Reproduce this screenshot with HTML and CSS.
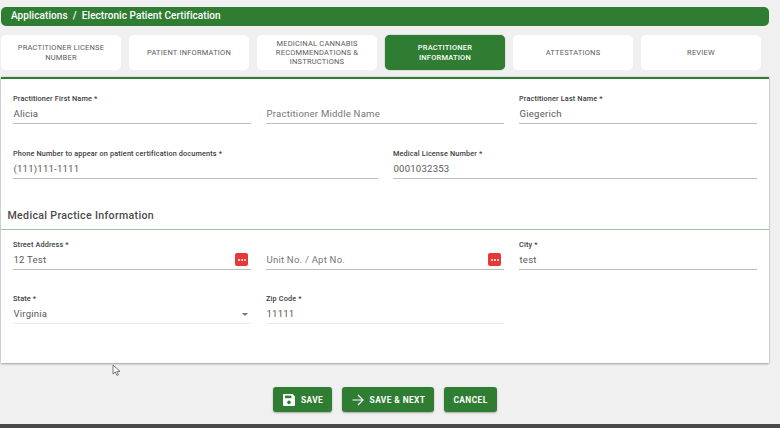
FILE: index.html
```html
<!DOCTYPE html>
<html lang="en">
<head>
<meta charset="utf-8">
<title>Electronic Patient Certification</title>
<link rel="stylesheet" href="styles.css">
</head>
<body>
<div class="page">
  <div class="crumb">Applications&nbsp; /&nbsp; Electronic Patient Certification</div>
  <nav class="tabs">
    <div class="tab">PRACTITIONER LICENSE NUMBER</div>
    <div class="tab">PATIENT INFORMATION</div>
    <div class="tab tab-tight">MEDICINAL CANNABIS RECOMMENDATIONS &amp; INSTRUCTIONS</div>
    <div class="tab active">PRACTITIONER INFORMATION</div>
    <div class="tab">ATTESTATIONS</div>
    <div class="tab">REVIEW</div>
  </nav>
  <main class="card">
    <div class="grid three row-first">
      <div class="field"><label>Practitioner First Name *</label><div class="value">Alicia</div></div>
      <div class="field"><label>&nbsp;</label><div class="value muted">Practitioner Middle Name</div></div>
      <div class="field"><label>Practitioner Last Name *</label><div class="value">Giegerich</div></div>
    </div>
    <div class="grid two row-second">
      <div class="field"><label>Phone Number to appear on patient certification documents *</label><div class="value">(111)111-1111</div></div>
      <div class="field"><label>Medical License Number *</label><div class="value">0001032353</div></div>
    </div>
    <h2 class="section">Medical Practice Information</h2>
    <div class="grid three row-third">
      <div class="field"><label>Street Address *</label><div class="value">12 Test<span class="more"><i></i><i></i><i></i></span></div></div>
      <div class="field"><label>&nbsp;</label><div class="value muted">Unit No. / Apt No.<span class="more"><i></i><i></i><i></i></span></div></div>
      <div class="field"><label>City *</label><div class="value">test</div></div>
    </div>
    <div class="grid three row-fourth">
      <div class="field light"><label>State *</label><div class="value">Virginia<span class="caret"></span></div></div>
      <div class="field light"><label>Zip Code *</label><div class="value">11111</div></div>
    </div>
  </main>
  <div class="actions">
    <button class="btn btn-save" type="button">
      <svg class="ico" width="14" height="14" viewBox="0 0 14 14"><path fill="#fff" d="M1.5 1h9L13 3.5V12a1 1 0 0 1-1 1H2a1 1 0 0 1-1-1V1.5A.5.5 0 0 1 1.5 1z"/><rect x="3" y="2.6" width="6.4" height="2.6" fill="#2e7d32"/><circle cx="7" cy="9.4" r="1.8" fill="#2e7d32"/></svg>SAVE</button>
    <button class="btn btn-next" type="button">
      <svg class="ico" width="14" height="14" viewBox="0 0 14 14"><path fill="none" stroke="#fff" stroke-width="1.2" d="M1.5 7h10.5M7 2l5 5-5 5"/></svg>SAVE &amp; NEXT</button>
    <button class="btn btn-cancel" type="button">CANCEL</button>
  </div>
  <svg class="cursor" width="10" height="13" viewBox="0 0 10 13"><path fill="#fff" stroke="#555" stroke-width=".8" d="M1 1v9l2.3-2 1.6 3.4 1.5-.7-1.6-3.3H8z"/></svg>
</div>
<div class="footer-line"></div>
</body>
</html>
```
FILE: styles.css
```css
* { box-sizing: border-box; }
html, body { margin: 0; height: 100%; }
body {
  background: #f0f0f0;
  font-family: Roboto, "Liberation Sans", sans-serif;
  color: #555;
  overflow: hidden;
  width: 780px;
  height: 428px;
  position: relative;
}
.page { padding: 7px 11px 0 1px; position: relative; }
.crumb {
  height: 19px;
  background: #2e7d32;
  border-radius: 5px;
  color: #fff;
  font-size: 10px;
  font-weight: 500;
  line-height: 18px;
  padding-left: 10px;
  letter-spacing: .07px;
}
.tabs { display: flex; gap: 8px; margin-top: 9px; padding-right: 8px; }
.tab {
  width: 120px;
  height: 35px;
  background: #fff;
  border-radius: 5px;
  display: flex;
  align-items: center;
  justify-content: center;
  text-align: center;
  font-size: 7.5px;
  line-height: 10px;
  padding: 0 8px;
  color: #5c5c5c;
  letter-spacing: .2px;
}
.tab-tight { line-height: 9.2px; padding: 0 6px; }
.tab.active { background: #2e7d32; color: #fff; font-weight: 500; padding: 0 24px; box-shadow: 0 0 1px #1b5e20; }
.card {
  margin-top: 7px;
  height: 286px;
  background: #fff;
  border-top: 2px solid #2e7d32;
  box-shadow: 0 1px 2px rgba(0,0,0,.3), 0 0 2px rgba(0,0,0,.15);
}
.grid { display: grid; padding: 0 12px; column-gap: 15px; }
.three { grid-template-columns: repeat(3, 238px); }
.two { grid-template-columns: 365px 364px; }
.row-first { padding-top: 16px; }
.row-second { padding-top: 26px; }
.row-third { padding-top: 11px; }
.row-fourth { padding-top: 25px; }
.field { height: 29px; border-bottom: 1px solid #bdbdbd; }
.field.light { border-bottom-color: #ececec; }
label {
  display: block;
  font-size: 7.3px;
  font-weight: 500;
  line-height: 8px;
  color: #3c3c3c;
  letter-spacing: .14px;
}
.value {
  position: relative;
  font-size: 9.6px;
  line-height: 14px;
  margin-top: 4px;
  padding-left: .5px;
  letter-spacing: .2px;
  color: #5a5a5a;
}
.muted { color: #777; }
.section {
  margin: 30px 0 0;
  height: 21px;
  padding-left: 6.5px;
  font-size: 10.6px;
  font-weight: 500;
  line-height: 14px;
  color: #4a4a4a;
  letter-spacing: .33px;
  border-bottom: 1px solid #9cc59e;
}
.more {
  position: absolute;
  right: 3px;
  top: 0;
  width: 13px;
  height: 13px;
  background: #e53935;
  border-radius: 2px;
  display: flex;
  align-items: center;
  justify-content: center;
  gap: 1px;
}
.more i { width: 2px; height: 2px; background: #fff; border-radius: 50%; }
.caret {
  position: absolute;
  right: 3px;
  top: 6px;
  border-left: 3.5px solid transparent;
  border-right: 3.5px solid transparent;
  border-top: 3.5px solid #777;
}
.actions { display: flex; justify-content: center; gap: 10px; margin-top: 24px; }
.btn {
  height: 25px;
  border: 0;
  border-radius: 3px;
  background: #2e7d32;
  color: #fff;
  font-family: Roboto, "Liberation Sans", sans-serif;
  font-size: 8.4px;
  font-weight: 700;
  letter-spacing: .4px;
  display: flex;
  align-items: center;
  justify-content: center;
  padding: 0;
  box-shadow: 0 1px 2px rgba(0,0,0,.3);
}
.btn-save { width: 59px; }
.btn-next { width: 92px; }
.btn-cancel { width: 53px; }
.ico { margin-right: 5px; flex: none; }
.btn-next .ico { margin-right: 5px; }
.cursor { position: absolute; left: 112px; top: 364px; }
.footer-line { position: absolute; left: 0; right: 0; bottom: 0; height: 4px; background: #4a4a4a; }
```
